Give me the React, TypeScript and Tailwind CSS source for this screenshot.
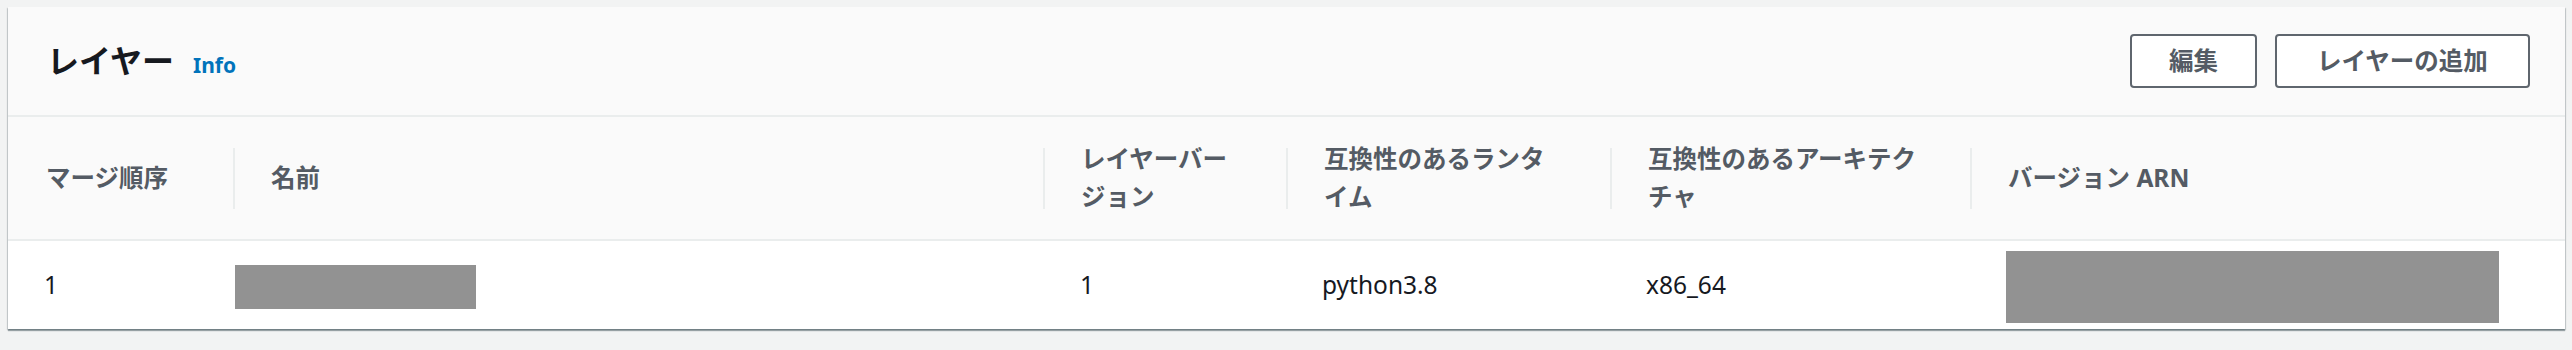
import React from "react";

const font = { fontFamily: '"Noto Sans", "Noto Sans CJK JP", sans-serif' };

type Col = { w: string; head: React.ReactNode; sep: boolean };

const cols: Col[] = [
  { w: "w-[225px]", head: "マージ順序", sep: false },
  { w: "w-[810px]", head: "名前", sep: true },
  { w: "w-[243px]", head: "レイヤーバージョン", sep: true },
  { w: "w-[324px]", head: "互換性のあるランタイム", sep: true },
  { w: "w-[360px]", head: "互換性のあるアーキテクチャ", sep: true },
  { w: "flex-1", head: "バージョン ARN", sep: true },
];

export default function App() {
  return (
    <div
      className="h-[350px] w-full bg-[#f2f3f3] pl-[8px] pr-[7px] pt-[7px]"
      style={font}
    >
      <div className="bg-white shadow-[0_2px_1px_0_rgba(0,28,36,0.35),1px_1px_1px_0_rgba(0,28,36,0.15),-1px_1px_1px_0_rgba(0,28,36,0.15)]">
        {/* Header */}
        <div className="flex h-[110px] items-center justify-between border-b-2 border-[#eaeded] bg-[#fafafa] pl-[39px] pr-[35px]">
          <div className="flex items-baseline gap-[19px]">
            <h2 className="text-[32px] font-bold leading-[40px] text-[#16191f]">
              レイヤー
            </h2>
            <span className="text-[21px] font-bold text-[#0073bb]">Info</span>
          </div>
          <div className="flex gap-[18px]">
            <button className="flex h-[54px] w-[127px] items-center justify-center rounded-[4px] border-2 border-[#5f666e] bg-white text-[24.5px] font-bold text-[#545b64]">
              編集
            </button>
            <button className="flex h-[54px] w-[255px] items-center justify-center rounded-[4px] border-2 border-[#5f666e] bg-white text-[24.5px] font-bold text-[#545b64]">
              レイヤーの追加
            </button>
          </div>
        </div>

        {/* Table header */}
        <div className="flex h-[124px] border-b-2 border-[#eaeded] bg-[#fafafa]">
          {cols.map((c, i) => (
            <div key={i} className={`${c.w} flex items-center`}>
              {c.sep ? (
                <div className="h-[61px] w-[2px] shrink-0 bg-[#eaeded]" />
              ) : (
                <div className="w-[2px] shrink-0" />
              )}
              <div className="min-w-0 flex-1 pl-[36px] pr-[46px] text-[24.5px] font-bold leading-[38px] text-[#545b64]">
                {c.head}
              </div>
            </div>
          ))}
        </div>

        {/* Data row */}
        <div className="flex h-[88px] items-center text-[24.5px] leading-[38px] text-[#16191f]">
          <div className="w-[225px] pl-[36px]">1</div>
          <div className="w-[810px] pl-[2px] pt-[4px]">
            <div className="h-[44px] w-[241px] bg-[#929292]" />
          </div>
          <div className="w-[243px] pl-[37px]">1</div>
          <div className="w-[324px] pl-[36px]">python3.8</div>
          <div className="w-[360px] pl-[36px]">x86_64</div>
          <div className="flex-1 pl-[36px] pt-[4px]">
            <div className="h-[72px] w-[493px] bg-[#929292]" />
          </div>
        </div>
      </div>
    </div>
  );
}
